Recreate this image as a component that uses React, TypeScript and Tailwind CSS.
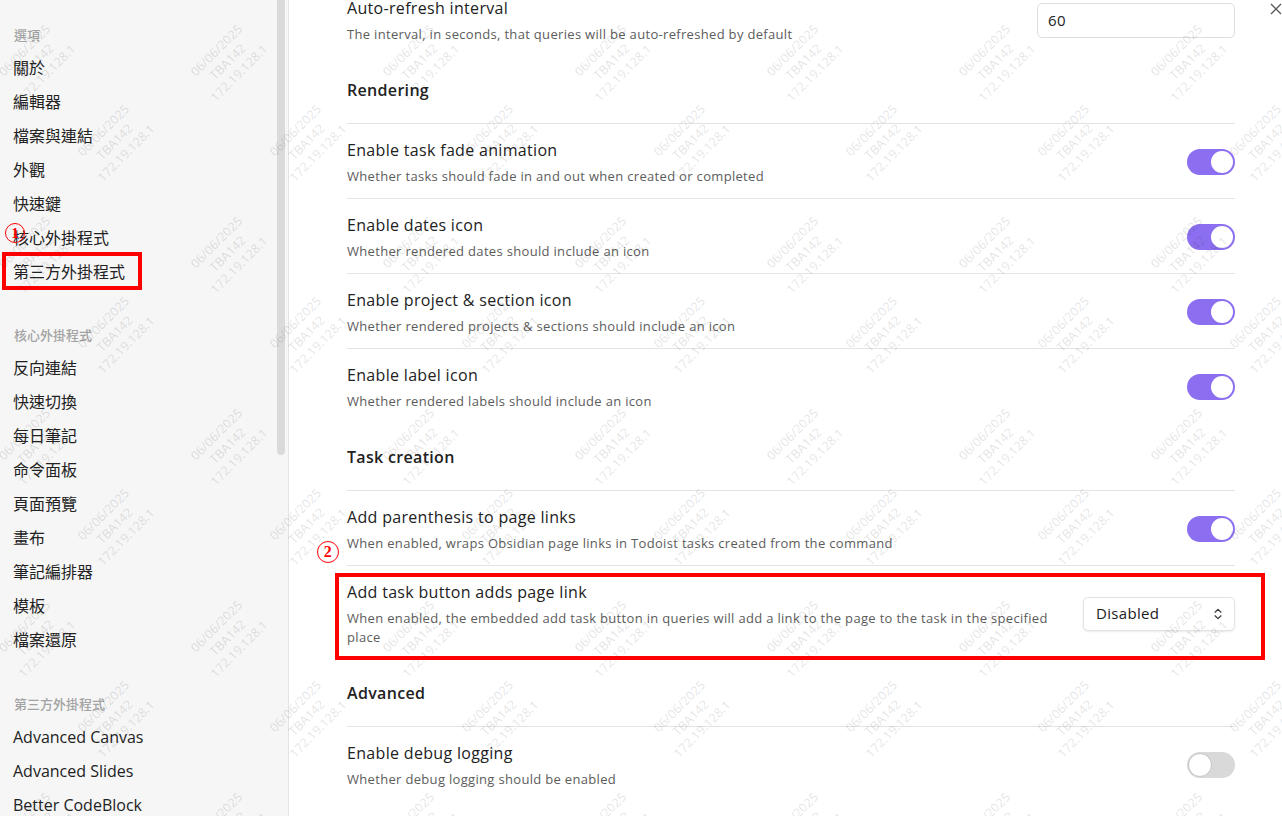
import { ChevronsUpDown } from "lucide-react";

const SIDEBAR = [
  {
    title: "選項",
    gap: "",
    items: ["關於", "編輯器", "檔案與連結", "外觀", "快速鍵", "核心外掛程式", "第三方外掛程式"],
  },
  {
    title: "核心外掛程式",
    gap: "mt-[36px]",
    items: ["反向連結", "快速切換", "每日筆記", "命令面板", "頁面預覽", "畫布", "筆記編排器", "模板", "檔案還原"],
  },
  {
    title: "第三方外掛程式",
    gap: "mt-[37px]",
    items: ["Advanced Canvas", "Advanced Slides", "Better CodeBlock"],
  },
];

function Circled({ n, size }: { n: string; size: string }) {
  return (
    <div
      className={`flex items-center justify-center rounded-full border-[1.5px] border-[#ff0000] bg-transparent font-[family-name:'Liberation_Serif',serif] font-bold text-[#ff0000] ${size}`}
    >
      {n}
    </div>
  );
}

function Toggle({ on }: { on: boolean }) {
  return on ? (
    <div className="flex h-[26px] w-[48px] shrink-0 items-center justify-end rounded-full bg-[#8c6ff0] px-[2px]">
      <div className="h-[22px] w-[22px] rounded-full bg-white" />
    </div>
  ) : (
    <div className="flex h-[26px] w-[48px] shrink-0 items-center justify-start rounded-full bg-[#d9d9d9] px-[1px]">
      <div className="h-[24px] w-[24px] rounded-full border border-[#c4c4c4] bg-white" />
    </div>
  );
}

function Heading({ children }: { children: string }) {
  return (
    <div className="border-b border-[#e3e3e3] pt-[22px] pb-[21px] text-[16px] leading-[24px] font-semibold text-[#222222]">
      {children}
    </div>
  );
}

function Row({
  name,
  desc,
  control,
  first,
}: {
  name: string;
  desc: React.ReactNode;
  control: React.ReactNode;
  first?: boolean;
}) {
  return (
    <div className={`flex items-center pt-[14px] pb-[12px] ${first ? "" : "border-t border-[#e3e3e3]"}`}>
      <div className="mr-[16px] flex-1">
        <div className="text-[16px] leading-[24px] text-[#222222]">{name}</div>
        <div className="mt-[5px] text-[13px] leading-[19px] text-[#5c5c5c]">{desc}</div>
      </div>
      {control}
    </div>
  );
}

function Watermarks() {
  const marks: { x: number; y: number }[] = [];
  for (let k = -1; k < 5; k++) {
    for (let j = -1; j < 8; j++) {
      marks.push({ x: 36 + 192 * j, y: 62 + 192 * k });
      marks.push({ x: 115 + 192 * j, y: 142 + 192 * k });
    }
  }
  return (
    <div className="pointer-events-none absolute inset-0 overflow-hidden">
      {marks.map((m, i) => (
        <div
          key={i}
          className="absolute -translate-x-1/2 -translate-y-1/2 -rotate-45 whitespace-nowrap text-center font-[family-name:'Noto_Sans',sans-serif] text-[12.5px] leading-[16px] tracking-normal text-black/[0.12]"
          style={{ left: m.x, top: m.y }}
        >
          06/06/2025
          <br />
          TBA142
          <br />
          172.19.128.1
        </div>
      ))}
    </div>
  );
}

export default function App() {
  return (
    <div className="relative flex h-[816px] w-[1282px] overflow-hidden bg-white font-[family-name:'Open_Sans','Noto_Sans_CJK_TC',sans-serif]">
      {/* Sidebar */}
      <aside className="relative w-[289px] shrink-0 border-r border-[#e3e3e3] bg-[#f6f6f6] pt-[25px] pl-[13px]">
        {SIDEBAR.map((sec, si) => (
          <div key={sec.title} className={sec.gap}>
            <div className="pb-[6px] pl-[1px] text-[13px] leading-[20px] font-medium text-[#a3a3a3]">{sec.title}</div>
            {sec.items.map((item) => (
              <div key={item} className="relative py-[5px] text-[16px] leading-[24px] text-[#222222]">
                {item}
                {si === 0 && item === "核心外掛程式" && (
                  <div className="absolute top-[2px] left-[-8px]">
                    <Circled n="1" size="h-[20px] w-[20px] text-[15px] leading-none" />
                  </div>
                )}
                {si === 0 && item === "第三方外掛程式" && (
                  <div className="absolute top-[-3px] left-[-11px] h-[38px] w-[140px] border-[4px] border-[#ff0000]" />
                )}
              </div>
            ))}
          </div>
        ))}
        <div className="absolute top-0 right-[3px] h-[455px] w-[8px] rounded-b-full bg-[#dadada]" />
      </aside>

      {/* Settings */}
      <main className="relative flex-1 pr-[47px] pl-[58px] tracking-[0.02em]">
        <div className="mt-[-18px]">
          <Row
            first
            name="Auto-refresh interval"
            desc="The interval, in seconds, that queries will be auto-refreshed by default"
            control={
              <div className="flex h-[35px] w-[198px] shrink-0 items-center rounded-[5px] border border-[#dedede] bg-white px-[10px] text-[15px] text-[#222222]">
                60
              </div>
            }
          />
          <Heading>Rendering</Heading>
          <Row
            first
            name="Enable task fade animation"
            desc="Whether tasks should fade in and out when created or completed"
            control={<Toggle on />}
          />
          <Row name="Enable dates icon" desc="Whether rendered dates should include an icon" control={<Toggle on />} />
          <Row
            name="Enable project & section icon"
            desc="Whether rendered projects & sections should include an icon"
            control={<Toggle on />}
          />
          <Row name="Enable label icon" desc="Whether rendered labels should include an icon" control={<Toggle on />} />
          <Heading>Task creation</Heading>
          <Row
            first
            name="Add parenthesis to page links"
            desc="When enabled, wraps Obsidian page links in Todoist tasks created from the command"
            control={<Toggle on />}
          />
          <div className="relative">
            <Row
              name="Add task button adds page link"
              desc={
                <>
                  When enabled, the embedded add task button in queries will add a link to the page to the task in the specified
                  <br />
                  place
                </>
              }
              control={
                <div className="flex h-[34px] w-[152px] shrink-0 items-center justify-between rounded-[5px] border border-[#e3e3e3] bg-white pr-[9px] pl-[12px] text-[15px] text-[#222222] shadow-[0_1px_2px_rgba(0,0,0,0.08)]">
                  Disabled
                  <ChevronsUpDown size={14} strokeWidth={2} className="text-[#333333]" />
                </div>
              }
            />
            <div className="pointer-events-none absolute top-[8px] right-[-30px] bottom-[-1px] left-[-12px] border-[4px] border-[#ff0000]" />
            <div className="absolute top-[-24px] left-[-30px]">
              <Circled n="2" size="h-[22px] w-[22px] text-[16px] leading-none" />
            </div>
          </div>
          <Heading>Advanced</Heading>
          <Row
            first
            name="Enable debug logging"
            desc="Whether debug logging should be enabled"
            control={<Toggle on={false} />}
          />
        </div>

        <svg
          className="absolute top-[3px] right-[0px] h-[12px] w-[12px] text-[#5a5a5a]"
          viewBox="0 0 12 12"
          fill="none"
          stroke="currentColor"
          strokeWidth="1.4"
        >
          <path d="M1 1 11 11M11 1 1 11" />
        </svg>
      </main>

      <Watermarks />
    </div>
  );
}
